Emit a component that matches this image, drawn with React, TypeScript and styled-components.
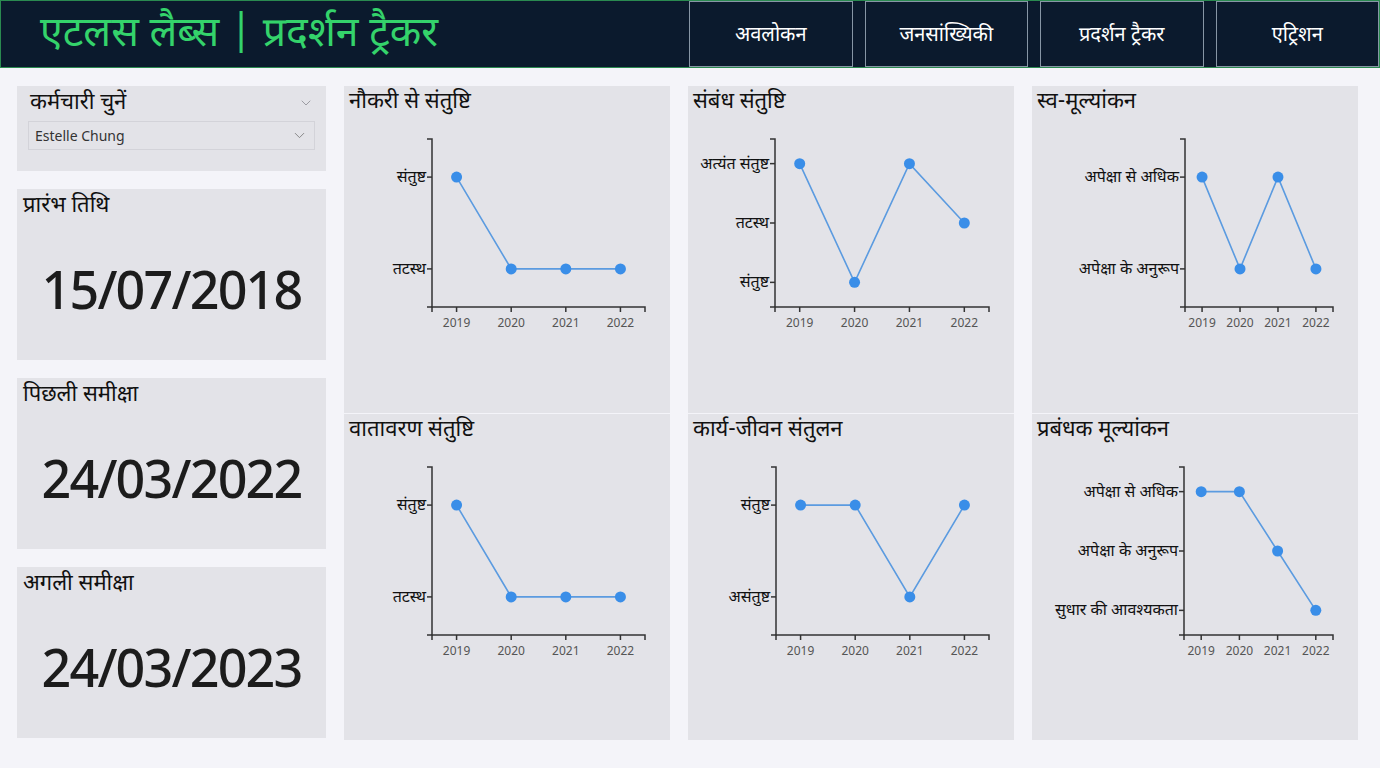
import React from 'react';
import styled, { createGlobalStyle } from 'styled-components';
import { ChevronDown } from 'lucide-react';

const DEV = `"Noto Sans Devanagari", "Nirmala UI", "Noto Sans", sans-serif`;
const LATIN = `"Noto Sans", "Open Sans", sans-serif`;

const GlobalStyle = createGlobalStyle`
  body {
    margin: 0;
    background: #f4f4f9;
    font-family: ${DEV};
    color: #111;
  }
`;

const Header = styled.header`
  height: 68px;
  box-sizing: border-box;
  display: flex;
  justify-content: space-between;
  background: #0b1a2d;
  border: 1px solid #2a8a50;
`;

const Brand = styled.h1`
  margin: 0;
  padding: 4px 0 0 39px;
  display: flex;
  align-items: center;
  font-size: 41px;
  font-weight: 400;
  color: #34d36b;
  font-family: ${DEV};
`;

const Nav = styled.nav`
  width: 690px;
  display: flex;
  gap: 12px;
`;

const NavButton = styled.button`
  flex: 1;
  padding-top: 4px;
  background: #0b1a2d;
  border: 1px solid #8796a5;
  color: #fff;
  font-size: 20px;
  font-family: ${DEV};
  cursor: pointer;
`;

const Main = styled.main`
  display: grid;
  grid-template-columns: 309px repeat(3, 326px);
  column-gap: 18px;
  padding: 18px 0 0 17px;
`;

const LeftColumn = styled.div`
  display: flex;
  flex-direction: column;
  gap: 18px;
`;

const Card = styled.section<{ $height: number }>`
  height: ${(p) => p.$height}px;
  box-sizing: border-box;
  background: #e3e3e8;
  display: flex;
  flex-direction: column;
`;

const CardTitle = styled.h2<{ $pad?: number }>`
  margin: 0;
  padding: 2px 0 0 ${(p) => p.$pad ?? 6}px;
  font-size: 22px;
  font-weight: 400;
  line-height: 32px;
  color: #111;
  font-family: ${DEV};
`;

const SelectHead = styled.div`
  display: flex;
  align-items: center;
  justify-content: space-between;
  padding: 0 12px 0 7px;
  svg {
    color: #8a8a90;
  }
`;

const SelectBox = styled.div`
  margin: 1px 11px 0 11px;
  height: 29px;
  box-sizing: border-box;
  border: 1px solid #d3d3d9;
  display: flex;
  align-items: center;
  justify-content: space-between;
  padding: 0 6px 0 6px;
  font-family: ${LATIN};
  font-size: 14px;
  color: #333;
  svg {
    color: #777;
  }
`;

const DateValue = styled.div`
  flex: 1;
  display: flex;
  align-items: center;
  justify-content: center;
  padding-bottom: 6px;
  font-family: ${LATIN};
  font-size: 52px;
  font-weight: 500;
  letter-spacing: -1.8px;
  color: #1c1c1c;
`;

const Panel = styled.section`
  display: flex;
  flex-direction: column;
  gap: 1px;
  height: 654px;
  background: #f4f4f9;
`;

const ChartHalf = styled.div`
  flex: 1;
  background: #e3e3e8;
  display: flex;
  flex-direction: column;
`;

const ChartTitle = styled.h3`
  margin: 0;
  height: 34px;
  box-sizing: border-box;
  padding: 1px 0 0 5px;
  font-size: 22px;
  font-weight: 400;
  line-height: 32px;
  font-family: ${DEV};
`;

const ChartSvg = styled.svg`
  display: block;
  overflow: visible;
  .cat {
    font-family: ${DEV};
    font-size: 16px;
    fill: #111;
  }
  .year {
    font-family: ${LATIN};
    font-size: 12px;
    fill: #555;
  }
`;

type ChartSpec = {
  title: string;
  axisX: number;
  labels: string[];
  values: number[];
};

const YEARS = ['2019', '2020', '2021', '2022'];

function LineChart({ spec }: { spec: ChartSpec }) {
  const { axisX, labels, values } = spec;
  const right = 301;
  const top = 19;
  const bottom = 187;
  const step = (right - axisX) / (YEARS.length - 1 + 0.9);
  const xs = YEARS.map((_, i) => axisX + step * 0.45 + step * i);
  const ystep = (bottom - top) / (labels.length - 1 + 0.83);
  const ys = labels.map((_, i) => top + ystep * 0.415 + ystep * i);
  const pts = values.map((v, i) => [xs[i], ys[v]]);

  return (
    <ChartHalf>
      <ChartTitle>{spec.title}</ChartTitle>
      <ChartSvg width={326} height={292}>
        <path
          d={`M${axisX - 5},${top} H${axisX} V${bottom} H${axisX - 5}`}
          fill="none"
          stroke="#333"
          strokeWidth={1.5}
        />
        <path
          d={`M${axisX},${bottom + 5} V${bottom} H${right} V${bottom + 5}`}
          fill="none"
          stroke="#333"
          strokeWidth={1.5}
        />
        {labels.map((l, i) => (
          <g key={l}>
            <line x1={axisX - 5} x2={axisX} y1={ys[i]} y2={ys[i]} stroke="#333" strokeWidth={1.5} />
            <text className="cat" x={axisX - 6} y={ys[i] + 5} textAnchor="end">
              {l}
            </text>
          </g>
        ))}
        {YEARS.map((y, i) => (
          <g key={y}>
            <line x1={xs[i]} x2={xs[i]} y1={bottom} y2={bottom + 5} stroke="#333" strokeWidth={1.5} />
            <text className="year" x={xs[i]} y={bottom + 20} textAnchor="middle">
              {y}
            </text>
          </g>
        ))}
        <polyline
          points={pts.map((p) => p.join(',')).join(' ')}
          fill="none"
          stroke="#5b9be0"
          strokeWidth={1.6}
        />
        {pts.map((p, i) => (
          <circle key={i} cx={p[0]} cy={p[1]} r={5.5} fill="#3a8ee8" />
        ))}
      </ChartSvg>
    </ChartHalf>
  );
}

const COLUMNS: ChartSpec[][] = [
  [
    { title: 'नौकरी से संतुष्टि', axisX: 88, labels: ['संतुष्ट', 'तटस्थ'], values: [0, 1, 1, 1] },
    { title: 'वातावरण संतुष्टि', axisX: 88, labels: ['संतुष्ट', 'तटस्थ'], values: [0, 1, 1, 1] },
  ],
  [
    {
      title: 'संबंध संतुष्टि',
      axisX: 87,
      labels: ['अत्यंत संतुष्ट', 'तटस्थ', 'संतुष्ट'],
      values: [0, 2, 0, 1],
    },
    { title: 'कार्य-जीवन संतुलन', axisX: 88, labels: ['संतुष्ट', 'असंतुष्ट'], values: [0, 0, 1, 0] },
  ],
  [
    {
      title: 'स्व-मूल्यांकन',
      axisX: 153,
      labels: ['अपेक्षा से अधिक', 'अपेक्षा के अनुरूप'],
      values: [0, 1, 0, 1],
    },
    {
      title: 'प्रबंधक मूल्यांकन',
      axisX: 152,
      labels: ['अपेक्षा से अधिक', 'अपेक्षा के अनुरूप', 'सुधार की आवश्यकता'],
      values: [0, 0, 1, 2],
    },
  ],
];

const DATES = [
  { label: 'प्रारंभ तिथि', value: '15/07/2018' },
  { label: 'पिछली समीक्षा', value: '24/03/2022' },
  { label: 'अगली समीक्षा', value: '24/03/2023' },
];

const NAV = ['अवलोकन', 'जनसांख्यिकी', 'प्रदर्शन ट्रैकर', 'एट्रिशन'];

export default function App() {
  return (
    <>
      <GlobalStyle />
      <Header>
        <Brand>एटलस लैब्स | प्रदर्शन ट्रैकर</Brand>
        <Nav>
          {NAV.map((n) => (
            <NavButton key={n}>{n}</NavButton>
          ))}
        </Nav>
      </Header>
      <Main>
        <LeftColumn>
          <Card $height={85}>
            <SelectHead>
              <CardTitle $pad={6}>कर्मचारी चुनें</CardTitle>
              <ChevronDown size={16} strokeWidth={1.2} />
            </SelectHead>
            <SelectBox>
              Estelle Chung
              <ChevronDown size={17} strokeWidth={1.2} />
            </SelectBox>
          </Card>
          {DATES.map((d) => (
            <Card key={d.label} $height={171}>
              <CardTitle>{d.label}</CardTitle>
              <DateValue>{d.value}</DateValue>
            </Card>
          ))}
        </LeftColumn>
        {COLUMNS.map((col, i) => (
          <Panel key={i}>
            {col.map((spec) => (
              <LineChart key={spec.title} spec={spec} />
            ))}
          </Panel>
        ))}
      </Main>
    </>
  );
}
